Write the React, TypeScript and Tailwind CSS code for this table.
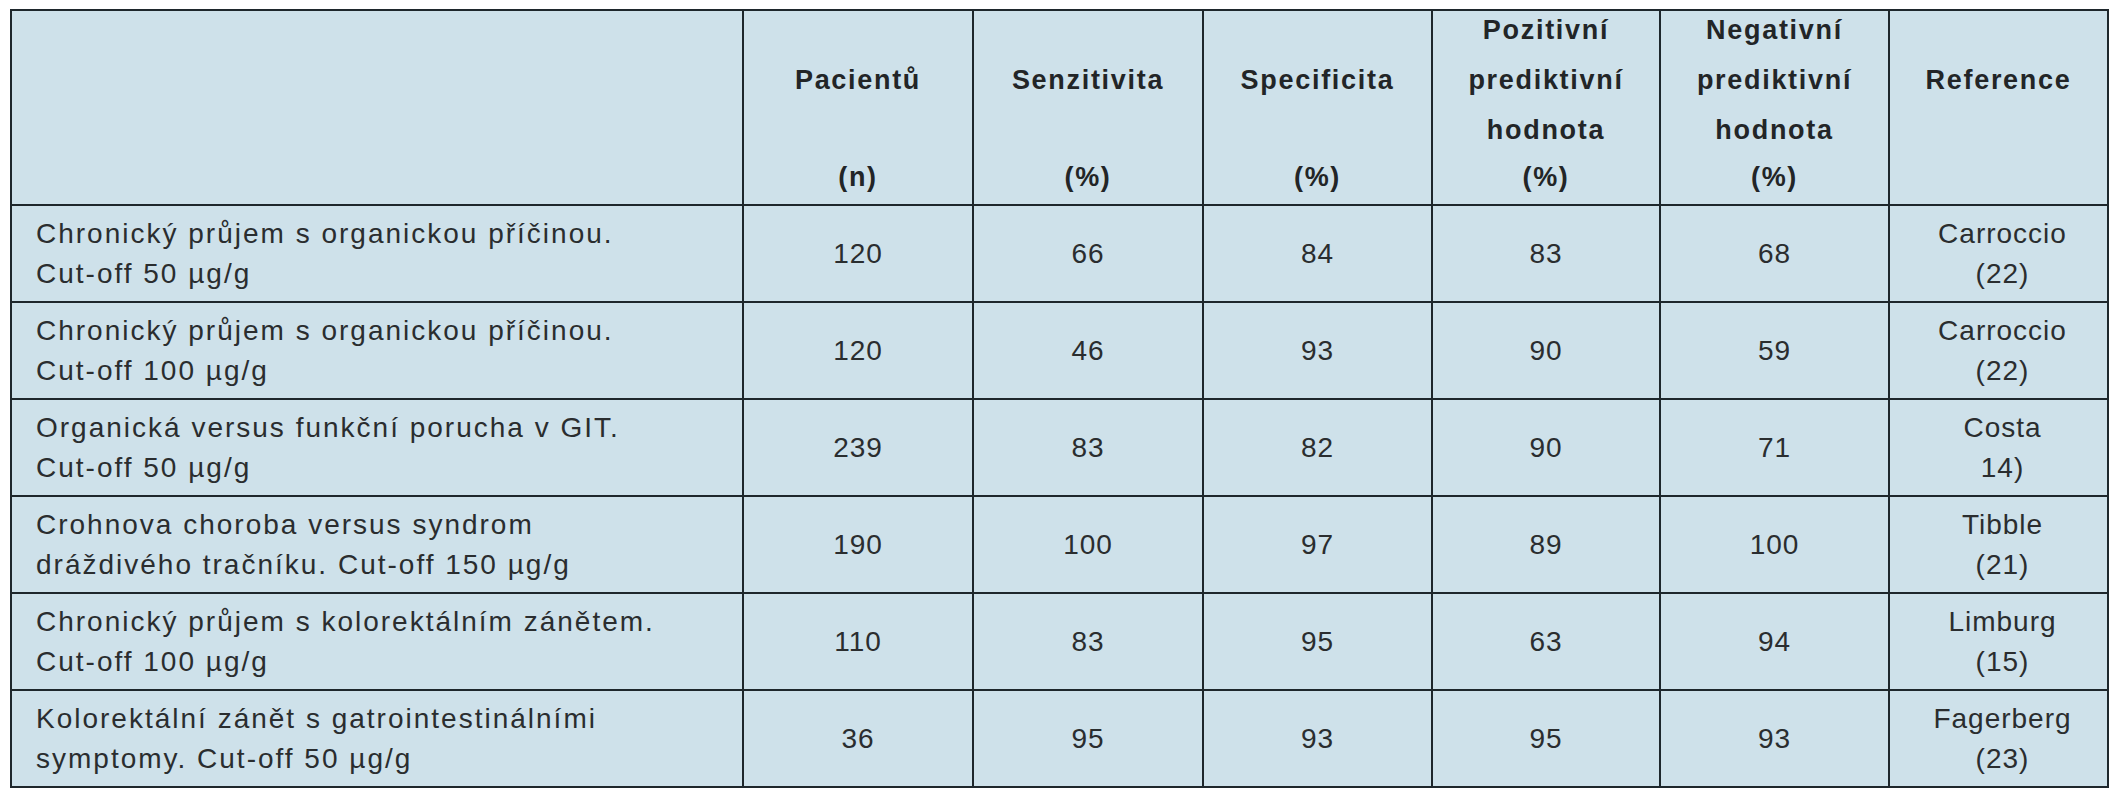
const headers = [
  { slots: ["", "", "", ""] },
  { slots: ["", "Pacientů", "", "(n)"] },
  { slots: ["", "Senzitivita", "", "(%)"] },
  { slots: ["", "Specificita", "", "(%)"] },
  { slots: ["Pozitivní", "prediktivní", "hodnota", "(%)"] },
  { slots: ["Negativní", "prediktivní", "hodnota", "(%)"] },
  { slots: ["", "Reference", "", ""] },
];

const rows = [
  { label: ["Chronický průjem s organickou příčinou.", "Cut-off 50 µg/g"], values: ["120", "66", "84", "83", "68"], ref: ["Carroccio", "(22)"] },
  { label: ["Chronický průjem s organickou příčinou.", "Cut-off 100 µg/g"], values: ["120", "46", "93", "90", "59"], ref: ["Carroccio", "(22)"] },
  { label: ["Organická versus funkční porucha v GIT.", "Cut-off 50 µg/g"], values: ["239", "83", "82", "90", "71"], ref: ["Costa", "14)"] },
  { label: ["Crohnova choroba versus syndrom", "dráždivého tračníku. Cut-off 150 µg/g"], values: ["190", "100", "97", "89", "100"], ref: ["Tibble", "(21)"] },
  { label: ["Chronický průjem s kolorektálním zánětem.", "Cut-off 100 µg/g"], values: ["110", "83", "95", "63", "94"], ref: ["Limburg", "(15)"] },
  { label: ["Kolorektální zánět s gatrointestinálními", "symptomy. Cut-off 50 µg/g"], values: ["36", "95", "93", "95", "93"], ref: ["Fagerberg", "(23)"] },
];

const widths = ["w-[732px]", "w-[230px]", "w-[230px]", "w-[229px]", "w-[228px]", "w-[229px]", "w-[219px]"];
const slotHeights = ["h-[50px] leading-[50px]", "h-[50px] leading-[50px]", "h-[50px] leading-[50px]", "h-[44px] leading-[44px]"];

export default function App() {
  return (
    <div className="w-[2122px] h-[800px] bg-white pt-[9px] pl-[10px] font-['Liberation_Sans',Arial,sans-serif] text-[#2a2d2f]">
      <table className="table-fixed border-collapse bg-[#cee1ea] w-[2097px]">
        <colgroup>
          {widths.map((w, i) => (
            <col key={i} className={w} />
          ))}
        </colgroup>
        <thead>
          <tr className="h-[195px]">
            {headers.map((h, i) => (
              <th key={i} className="border-2 border-[#1e272c] p-0 align-top font-bold text-[27px] tracking-[1.7px] text-[#222527]">
                <div className="flex flex-col -mt-[6px]">
                  {h.slots.map((s, j) => (
                    <div key={j} className={`${slotHeights[j]} text-center whitespace-nowrap`}>
                      {s}
                    </div>
                  ))}
                </div>
              </th>
            ))}
          </tr>
        </thead>
        <tbody>
          {rows.map((r, i) => (
            <tr key={i} className="h-[97px]">
              <td className="border-2 border-[#1e272c] pl-[24px] py-0 text-[28px] leading-[40px] tracking-[2px] whitespace-nowrap">
                <div>{r.label[0]}</div>
                <div>{r.label[1]}</div>
              </td>
              {r.values.map((v, j) => (
                <td key={j} className="border-2 border-[#1e272c] p-0 text-center text-[28px] tracking-[1px]">
                  {v}
                </td>
              ))}
              <td className="border-2 border-[#1e272c] p-0 pl-[8px] text-center text-[28px] leading-[40px] tracking-[1px]">
                <div>{r.ref[0]}</div>
                <div>{r.ref[1]}</div>
              </td>
            </tr>
          ))}
        </tbody>
      </table>
    </div>
  );
}
